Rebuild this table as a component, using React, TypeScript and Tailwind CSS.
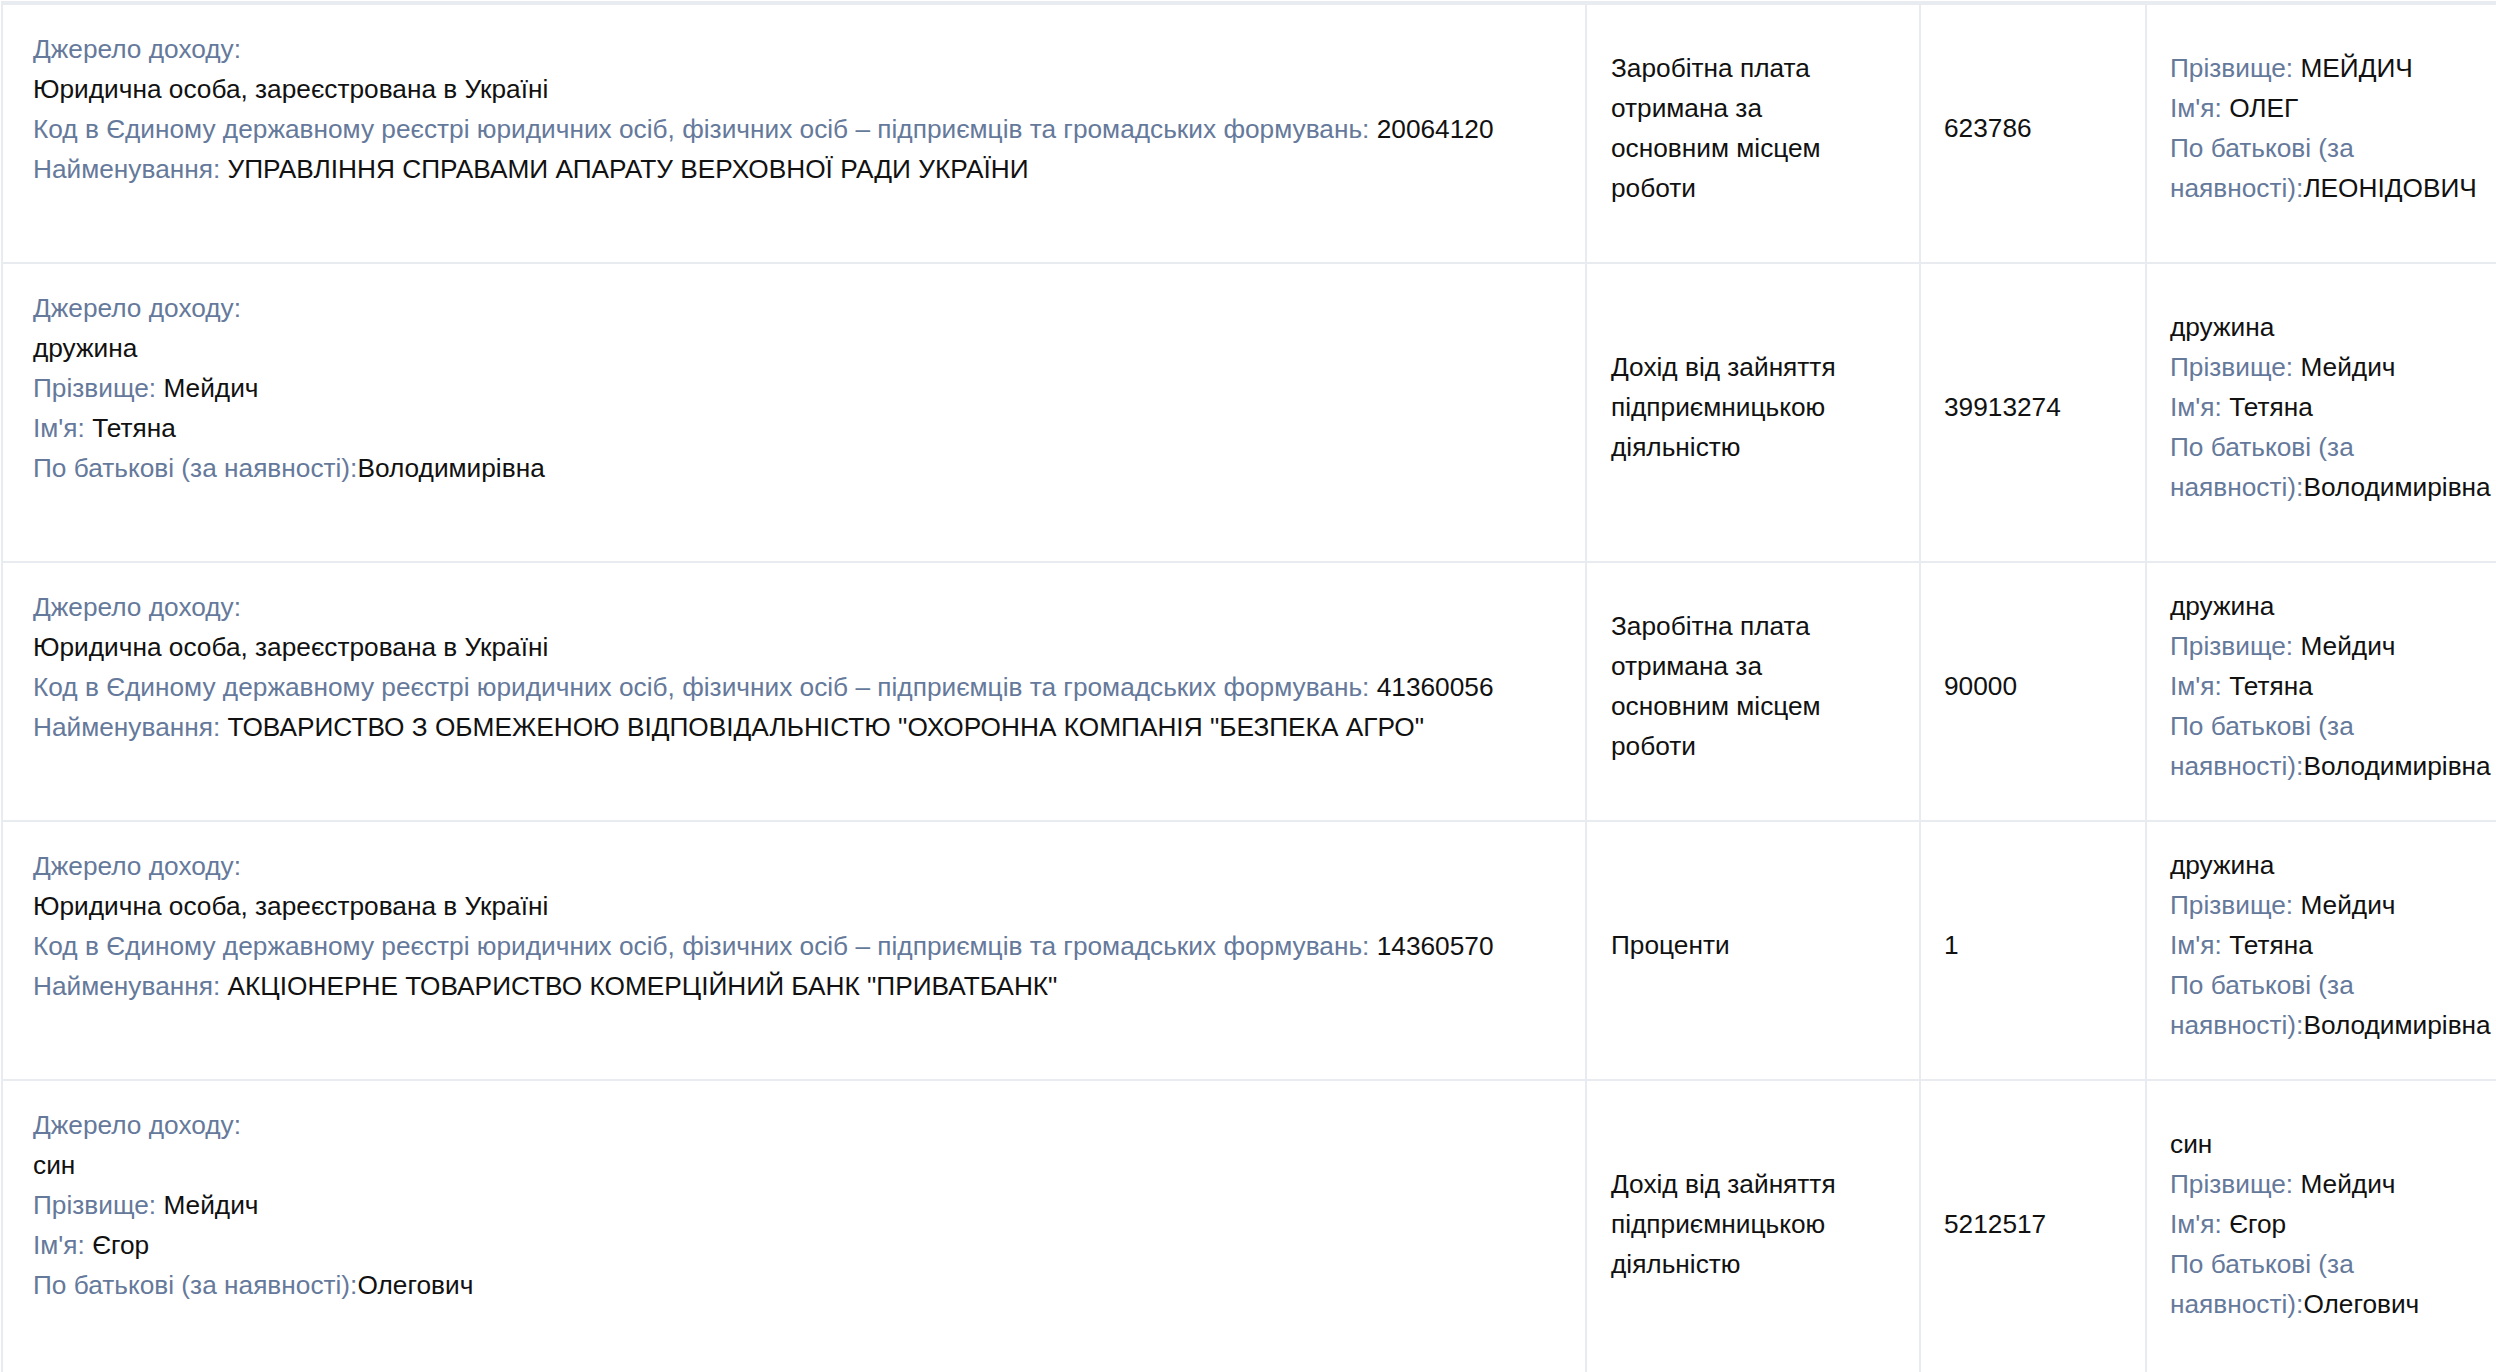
import React from "react";

type Part = { label?: string; value?: string };
type Line = Part[];

type Row = {
  source: Line[];
  kind: string;
  amount: string;
  person: Line[];
};

function legal(code: string, name: string): Line[] {
  return [
    [{ label: "Джерело доходу:" }],
    [{ value: "Юридична особа, зареєстрована в Україні" }],
    [
      {
        label:
          "Код в Єдиному державному реєстрі юридичних осіб, фізичних осіб – підприємців та громадських формувань:",
        value: " " + code
      }
    ],
    [{ label: "Найменування:", value: " " + name }]
  ];
}

function family(rel: string, last: string, first: string, middle: string): Line[] {
  return [
    [{ value: rel }],
    [{ label: "Прізвище:", value: " " + last }],
    [{ label: "Ім'я:", value: " " + first }],
    [{ label: "По батькові (за наявності):", value: middle }]
  ];
}

const rows: Row[] = [
  {
    source: legal("20064120", "УПРАВЛІННЯ СПРАВАМИ АПАРАТУ ВЕРХОВНОЇ РАДИ УКРАЇНИ"),
    kind: "Заробітна плата отримана за основним місцем роботи",
    amount: "623786",
    person: family("", "МЕЙДИЧ", "ОЛЕГ", "ЛЕОНІДОВИЧ").slice(1)
  },
  {
    source: [[{ label: "Джерело доходу:" }], ...family("дружина", "Мейдич", "Тетяна", "Володимирівна")],
    kind: "Дохід від зайняття підприємницькою діяльністю",
    amount: "39913274",
    person: family("дружина", "Мейдич", "Тетяна", "Володимирівна")
  },
  {
    source: legal(
      "41360056",
      'ТОВАРИСТВО З ОБМЕЖЕНОЮ ВІДПОВІДАЛЬНІСТЮ "ОХОРОННА КОМПАНІЯ "БЕЗПЕКА АГРО"'
    ),
    kind: "Заробітна плата отримана за основним місцем роботи",
    amount: "90000",
    person: family("дружина", "Мейдич", "Тетяна", "Володимирівна")
  },
  {
    source: legal("14360570", 'АКЦІОНЕРНЕ ТОВАРИСТВО КОМЕРЦІЙНИЙ БАНК "ПРИВАТБАНК"'),
    kind: "Проценти",
    amount: "1",
    person: family("дружина", "Мейдич", "Тетяна", "Володимирівна")
  },
  {
    source: [[{ label: "Джерело доходу:" }], ...family("син", "Мейдич", "Єгор", "Олегович")],
    kind: "Дохід від зайняття підприємницькою діяльністю",
    amount: "5212517",
    person: family("син", "Мейдич", "Єгор", "Олегович")
  }
];

function Lines({ lines }: { lines: Line[] }) {
  return (
    <>
      {lines.map((line, i) => (
        <div key={i}>
          {line.map((part, j) => (
            <span key={j}>
              {part.label && <span className="text-[#65799b]">{part.label}</span>}
              {part.value}
            </span>
          ))}
        </div>
      ))}
    </>
  );
}

export default function App() {
  return (
    <div
      className="w-[2496px] h-[1372px] overflow-hidden bg-white text-[26.25px] leading-[40px] text-[#111]"
      style={{ fontFamily: '"Liberation Sans", Arial, sans-serif' }}
    >
      <div className="w-max ml-[1px] mt-[1px] border-l-2 border-t-4 border-[#e8ebef]">
        {rows.map((row, i) => (
          <div
            key={i}
            className="grid grid-cols-[1584px_334px_226px_380px] border-b-2 border-[#e8ebef]"
          >
            <div className="border-r-2 border-[#e8ebef] pl-[30px] pt-[24px] pb-[73px] whitespace-nowrap">
              <Lines lines={row.source} />
            </div>

            <div className="border-r-2 border-[#e8ebef] pl-6 pr-[56px] pb-[12px] flex items-center">
              <div>{row.kind}</div>
            </div>

            <div className="border-r-2 border-[#e8ebef] pl-[23px] pb-[12px] flex items-center">
              <div>{row.amount}</div>
            </div>

            <div className="pl-[23px] pb-[12px] flex items-center">
              <div>
                <Lines lines={row.person} />
              </div>
            </div>
          </div>
        ))}
      </div>
    </div>
  );
}
